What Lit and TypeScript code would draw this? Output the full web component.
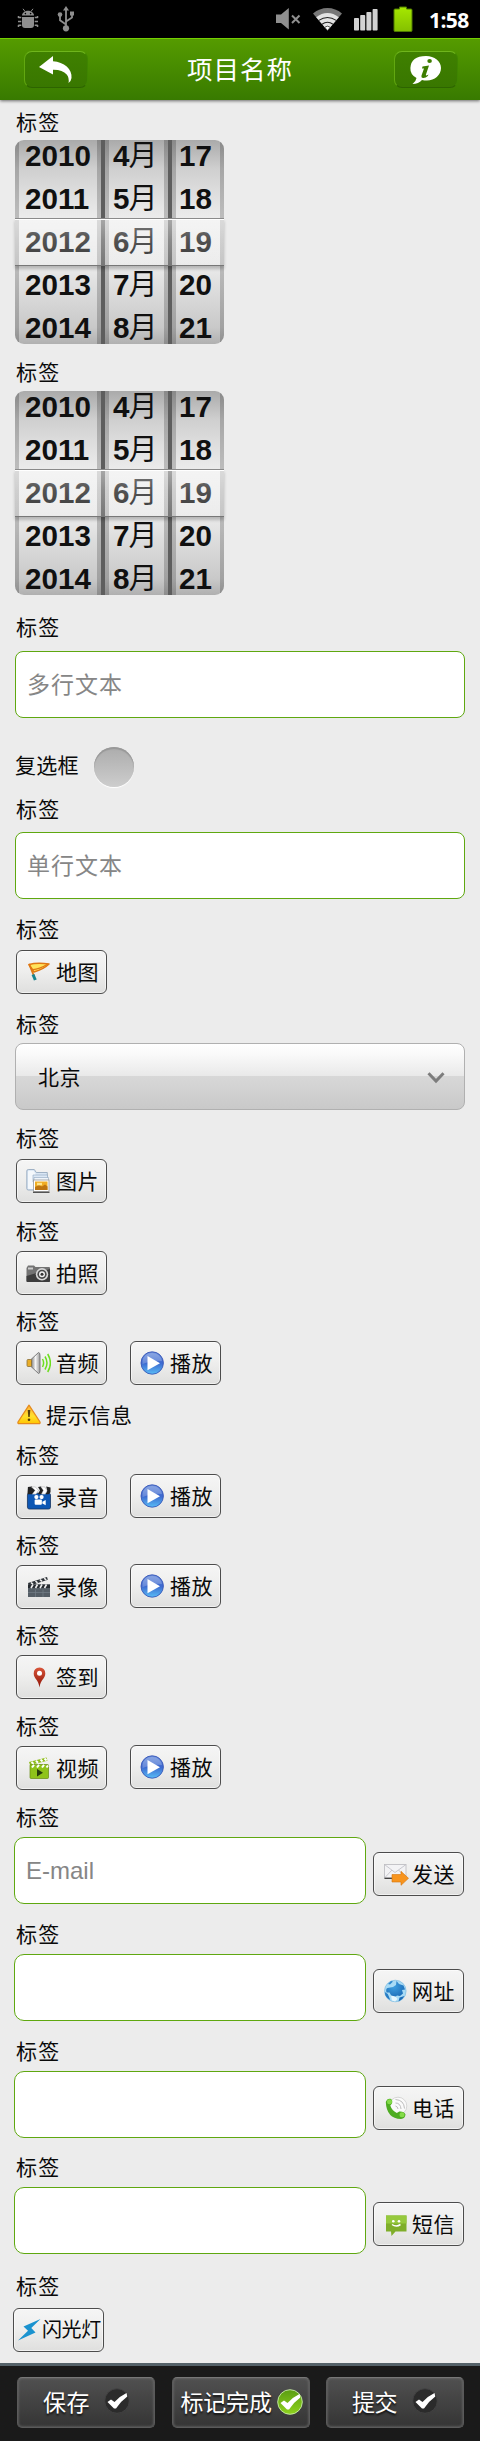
import { LitElement, html, css, nothing, TemplateResult } from "lit";
import { customElement, property } from "lit/decorators.js";

const icons: Record<string, TemplateResult> = {
  debug: html`<svg width="22" height="22" viewBox="0 0 22 22" fill="#8e8e8e">
    <path d="M5 7.600C5 5 7.600 2.800 11 2.800S17 5 17 7.600z" />
    <path d="M6 .8l2 2.600M16 .8l-2 2.600" stroke="#8e8e8e" stroke-width="1" />
    <path d="M5 9h12v8q0 3-3 3H8q-3 0-3-3z" />
    <path d="M4.300 9.600H1.300M4.300 13.500H1M4.300 17.200H1.300M17.700 9.600h3M17.700 13.500H21M17.700 17.200h3M1.500 8v2M20.500 8v2M1.500 19v-2M20.500 19v-2" stroke="#8e8e8e" stroke-width="1.500" fill="none" />
    <circle cx="8.400" cy="5.600" r=".8" fill="#000" /><circle cx="13.600" cy="5.600" r=".8" fill="#000" />
  </svg>`,
  usb: html`<svg width="18" height="26" viewBox="0 0 18 26" fill="none" stroke="#8e8e8e" stroke-width="1.800">
    <path d="M9 22V3M9 18.500l-6-4.200V10M9 15.500l6-4V8" />
    <path d="M9 0l3 4.500H6z" fill="#8e8e8e" stroke="none" />
    <circle cx="9" cy="22.300" r="3.100" fill="#8e8e8e" stroke="none" />
    <circle cx="3" cy="8.600" r="2.300" fill="#8e8e8e" stroke="none" />
    <rect x="13" y="5.500" width="4" height="4" fill="#8e8e8e" stroke="none" />
  </svg>`,
  mute: html`<svg width="25" height="22" viewBox="0 0 25 22">
    <path d="M0 6.500h5L12.800 0v21.500L5 15H0z" fill="#8f8f8f" />
    <path d="M16 7.500l7.500 7.500M23.500 7.500L16 15" stroke="#8f8f8f" stroke-width="2" />
  </svg>`,
  wifi: html`<svg width="29" height="23" viewBox="0 0 29 23">
    <path d="M14.500 22.500L0 5.500Q6.500 0 14.500 0T29 5.500z" fill="#777" />
    <path d="M14.500 22.500L3.200 9.300Q8.500 5 14.500 5t11.300 4.300z" fill="#e2e2e2" />
    <path d="M5.800 12.400Q14.500 6.500 23.200 12.400M9 16.200q5.500-4 11 0" fill="none" stroke="#222" stroke-width="1.100" />
    <path d="M11.700 19.300q2.800-2.300 5.600 0l-2.800 3.200z" fill="#fff" stroke="#222" stroke-width=".8" />
  </svg>`,
  signal: html`<svg width="24" height="22" viewBox="0 0 24 22" fill="#d2d2d2">
    <rect x="0" y="9" width="5" height="12.500" rx=".8" /><rect x="6.200" y="6" width="5" height="15.500" rx=".8" />
    <rect x="12.400" y="3" width="5" height="18.500" rx=".8" /><rect x="18.600" y="0" width="5" height="21.500" rx=".8" />
  </svg>`,
  battery: html`<svg width="20" height="27" viewBox="0 0 20 27">
    <defs><linearGradient id="g" x1="0" x2="0" y1="0" y2="1"><stop stop-color="#a6e800" /><stop offset="1" stop-color="#84c000" /></linearGradient></defs>
    <path d="M6.500 1h7v2H18a1 1 0 0 1 1 1v20.500a1 1 0 0 1-1 1H2a1 1 0 0 1-1-1V4a1 1 0 0 1 1-1h4.500z" fill="url(#g)" stroke="#4e7a00" stroke-width="1" />
  </svg>`,
  back: html`<svg width="34" height="28" viewBox="0 0 34 28">
    <path d="M0 11L14 0v5.200C25 6 33.500 13 32.500 22q-.5 3.500-3 5 1-5-1.800-8.500-4.200-5-13.700-4.800v4.800z" fill="#fff" />
  </svg>`,
  info: html`<svg width="32" height="28" viewBox="0 0 32 28">
    <path d="M16 0c8.500 0 15 5 15 12s-6.500 12.500-14 12.500q-3 0-5-.5-3.500 3.800-9.500 4Q6 25.500 6.500 22 0 18.500.4 12 1 0 16 0z" fill="#fff" />
    <path d="M12.500 10.500l6.500-1-3.200 9.500q0 1.200 2.700-.6l-.7 1.600q-2.300 2.300-5 2-2-.3-1.300-2.500l2.500-7-2 0z" fill="#3d7d00" />
    <ellipse cx="19.600" cy="5" rx="2.300" ry="2" fill="#3d7d00" />
  </svg>`,
  chevron: html`<svg width="18" height="12" viewBox="0 0 18 12"><path d="M1.500 1.200L9 9l7.500-7.800" fill="none" stroke="#7d7d7d" stroke-width="3" /></svg>`,
  map: html`<svg width="24" height="24" viewBox="0 0 24 24">
    <path d="M3 4.500Q11 2.500 23 4 18 9 8 12z" fill="#ffe45c" stroke="#e07813" stroke-width="1.500" stroke-linejoin="round" />
    <path d="M6 9.500q6 .5 16-5.500" stroke="#e07813" stroke-width="1.300" fill="none" />
    <path d="M3 4l5 12" stroke="#e07813" stroke-width="1.800" /><path d="M7 14.500l2.300 5.500" stroke="#17848f" stroke-width="3" />
  </svg>`,
  picture: html`<svg width="24" height="24" viewBox="0 0 24 24">
    <path d="M.8 2q0-1.500 1.500-1.500h6l2 3h11v17.500H2.300q-1.500 0-1.500-1.500z" fill="#d9e6f4" stroke="#8da2b9" stroke-width=".8" />
    <path d="M2 3q0-1.300 1.300-1.300h4.200l2 3V20H3q-1 0-1-1z" fill="#f4f8fc" />
    <path d="M7 6h14.500v7H7z" fill="#dce8f5" stroke="#8fa6bf" stroke-width=".6" /><path d="M8 8.500h14.500v6H8z" fill="#eff5fb" stroke="#8fa6bf" stroke-width=".6" />
    <rect x="7.500" y="11" width="15.500" height="11.500" fill="#fff" stroke="#999" stroke-width=".8" />
    <rect x="9" y="12.500" width="12.500" height="8.500" fill="#f0ad24" /><path d="M9 18l4-2 3 1.500 3-2 2.500 2V21H9z" fill="#bd7410" /><path d="M11 13.800h5v2.500h-5z" fill="#ffe48b" />
    <path d="M7 23.300h16.500" stroke="#303030" stroke-width="1" />
  </svg>`,
  camera: html`<svg width="24" height="24" viewBox="0 0 24 24">
    <path d="M2 4.500h6l1.500 1.500H23q1 0 1 1v13q0 1-1 1H1.500q-1 0-1-1V7z" fill="#737373" />
    <path d="M.5 15L24 8v12q0 1-1 1H1.500q-1 0-1-1z" fill="#3d3d3d" /><rect x="2" y="6.500" width="5" height="2" fill="#ccc" />
    <circle cx="16" cy="13.300" r="6.200" fill="#d8d8d8" /><circle cx="16" cy="13.300" r="4.600" fill="#4a4a4a" /><circle cx="16" cy="13.300" r="3" fill="#f0f0f0" /><circle cx="16" cy="13.300" r="1.500" fill="#333" />
  </svg>`,
  speaker: html`<svg width="25" height="24" viewBox="0 0 25 24">
    <defs><linearGradient id="s" x1="0" x2="1"><stop stop-color="#777" /><stop offset=".5" stop-color="#f6f6f6" /><stop offset="1" stop-color="#999" /></linearGradient></defs>
    <path d="M5 8.500L12.500 1.500q1.500 0 1.500 3v15q0 3-1.500 3L5 15.500z" fill="url(#s)" stroke="#717171" stroke-width=".9" />
    <rect x="1" y="8.500" width="4.500" height="7" rx="1" fill="#e9ad27" stroke="#8a7038" stroke-width=".8" />
    <path d="M16.500 8q2.200 4 0 8M19 5.500q4 6.500 0 13M21.700 3q5.400 9 0 18" fill="none" stroke="#6dde1e" stroke-width="1.500" />
  </svg>`,
  play: html`<svg width="24" height="24" viewBox="0 0 24 24">
    <defs><linearGradient id="p" x1="0" x2="0" y1="0" y2="1"><stop stop-color="#6d90dc" /><stop offset=".5" stop-color="#3c68cf" /><stop offset="1" stop-color="#59bdf6" /></linearGradient></defs>
    <circle cx="12.200" cy="12" r="11.200" fill="url(#p)" stroke="#3a58b8" stroke-width=".9" />
    <path d="M2.500 10Q4 2 12 2t10 8Q12 9 2.500 13z" fill="#fff" opacity=".22" />
    <path d="M7.500 5l12.500 7.200-12.500 7z" fill="#fff" />
  </svg>`,
  warn: html`<svg width="24" height="21" viewBox="0 0 24 21">
    <defs><linearGradient id="w" x1="0" x2="0" y1="0" y2="1"><stop stop-color="#ffb13a" /><stop offset=".6" stop-color="#ffe02b" /><stop offset="1" stop-color="#ffc400" /></linearGradient></defs>
    <path d="M12 1.200L23 18q.5 1.700-1.300 1.700H2.300Q.5 19.700 1 18z" fill="url(#w)" stroke="#e58a1d" stroke-width="1.300" stroke-linejoin="round" />
    <path d="M10.700 6h2.600l-.6 7h-1.400z" fill="#57420b" /><circle cx="12" cy="15.800" r="1.300" fill="#57420b" />
  </svg>`,
  record: html`<svg width="26" height="25" viewBox="-1.500 0 26 25">
    <rect x="0" y="8" width="24" height="16.500" rx="2" fill="#0d57b4" stroke="#12305c" stroke-width=".8" />
    <path d="M.5 1.500l4-.5 4 4.500-4 3.500H0zM11 1.500L14 1l3 4-2 4h-4l2-4zM19.500 1L24 2v5l-2 2h-3l1.500-4z" fill="#222" />
    <path d="M4 1.500L8 1.500l3.500 3.500L9 9H5l3-4zM14 1.500h4l2.500 4L18.500 9h-4l2-4z" fill="#fff" stroke="#888" stroke-width=".4" />
    <circle cx="9.300" cy="12" r="2.200" fill="#fff" /><circle cx="14.700" cy="12" r="2.200" fill="#fff" /><rect x="7.500" y="14.500" width="7.500" height="5.500" rx="1" fill="#fff" /><path d="M15.500 17l3.500-2v5.500l-3.500-1.700z" fill="#fff" />
  </svg>`,
  clapper: html`<svg width="25" height="24" viewBox="-1 0 25 24">
    <path d="M1 8L20 2l.8 2.800L2 11z" fill="#2d3237" /><path d="M4 7.500l2 1.800M8.500 6l2 1.800M13 4.600l2 1.800M17.200 3.200l2 1.800" stroke="#eee" stroke-width="1.600" />
    <rect x="1" y="9.500" width="22" height="12.500" fill="#555e66" /><rect x="1" y="9.500" width="22" height="3.500" fill="#262b30" />
    <path d="M4 13l2-3.500M8.500 13l2-3.500M13 13l2-3.500M17.500 13l2-3.500" stroke="#eee" stroke-width="1.600" /><path d="M1 17.500h22M8.500 14.500V22M16 14.500V22" stroke="#747e87" stroke-width=".7" />
  </svg>`,
  pin: html`<svg width="24" height="24" viewBox="0 0 24 24">
    <defs><linearGradient id="r" x1="0" x2="0" y1="0" y2="1"><stop stop-color="#d9563b" /><stop offset="1" stop-color="#8d1204" /></linearGradient></defs>
    <path d="M13.500 2.500q5.800.3 5.800 6c0 5-5 6.500-5.800 14-.8-7.500-5.800-9-5.800-14q0-5.700 5.800-6z" fill="url(#r)" /><circle cx="13.500" cy="8.200" r="2.500" fill="#fff" />
  </svg>`,
  video: html`<svg width="24" height="24" viewBox="0 0 24 24">
    <path d="M3 6L20.500 1.500l1 3.200L4 9z" fill="#8fbd1c" /><path d="M5.500 6l2 2M10 4.700l2 2M14.500 3.500l2 2M18.500 2.500l2 2" stroke="#fff" stroke-width="2" />
    <rect x="4" y="8.500" width="18.500" height="14" rx="1" fill="#8fc31a" stroke="#648a0e" stroke-width=".7" /><path d="M6 11.500l2-2.700M11 11.500l2-2.700M16 11.500l2-2.700M20.500 11.500l1.500-2" stroke="#fff" stroke-width="2" />
    <path d="M11 13l6 3.800-6 3.700z" fill="#263b0b" />
  </svg>`,
  send: html`<svg width="25" height="24" viewBox="0 0 25 24">
    <rect x=".5" y="2.500" width="21.500" height="13.500" fill="#f3f3f5" stroke="#b9b9bd" stroke-width=".8" /><path d="M.5 2.500L11 10.500l11-8M.5 16l7.500-8M22 16l-7.500-8" fill="none" stroke="#c2c2c7" stroke-width=".9" /><path d="M.5 16.300H9" stroke="#333" stroke-width="1.200" />
    <path d="M8 12.500h9V9.300l7.500 7-7.500 7V20H8z" fill="#f7941e" stroke="#d5730c" stroke-width=".6" />
  </svg>`,
  globe: html`<svg width="24" height="24" viewBox="0 0 24 24">
    <defs><radialGradient id="e" cx=".4" cy=".35" r=".8"><stop stop-color="#3f9fe0" /><stop offset="1" stop-color="#1663b0" /></radialGradient></defs>
    <circle cx="11.300" cy="12" r="10.800" fill="#a9dbf5" stroke="#76b6dd" stroke-width=".6" />
    <path d="M9 8l3-2 .5-4 2.500 3 4.500 1.500 1.500 4-3 .5 1 3.500-3 2.500-3-.5-2.500 2-3-1.500-2-3.500-3 0q-1-4 1-4.500z" fill="url(#e)" /><path d="M.8 13l3 2 2.500 6Q1 18.500.8 13zM15.500 18.500l5-1.500q-2 4-6 5.500zM4 5l3-3 2 .5-3 3z" fill="url(#e)" />
    <path d="M7 16.500l4.500 1 2 2.500-2.500 2.500-3-1z" fill="#e6f6fd" />
  </svg>`,
  phone: html`<svg width="24" height="24" viewBox="0 0 24 24">
    <circle cx="14" cy="10" r="8.800" fill="#fafafa" stroke="#c9c9c9" stroke-width=".7" /><path d="M11.500 7q5 0 5.500 6M11.500 3.500q8.500.5 9 9M11.500 10q2.300.5 2.500 3" fill="none" stroke="#bdbdbd" stroke-width="1" />
    <path d="M1.800 6Q3 2.200 6.500 2.700 9 4 8 7.500L6.300 9.500q1.500 5 6.500 7.500l2.500-1.500q5-.3 6.200 3-.4 4-4.500 4.500Q2.500 22.500 1.800 6z" fill="#4eac22" /><circle cx="5.500" cy="5.700" r="2.500" fill="#84dc48" /><circle cx="18" cy="18.800" r="2.500" fill="#84dc48" />
  </svg>`,
  sms: html`<svg width="24" height="24" viewBox="0 0 24 24">
    <path d="M2 3.500h20.500v16H11.500L7.500 24l-.5-4.500H2z" fill="#7fae2a" /><path d="M2 3.500h20.500v8H2z" fill="#96c93d" /><circle cx="9.300" cy="9.200" r="1.300" fill="#fff" /><circle cx="15" cy="9.200" r="1.300" fill="#fff" /><path d="M8 12.500q4.200 2.800 8.500 0" fill="none" stroke="#fff" stroke-width="1.500" />
  </svg>`,
  flash: html`<svg width="24" height="24" viewBox="0 0 24 24"><path d="M23.500 1L6.500 8.500l4.500 4.200L1 22.500l17.500-8-4.200-4.500z" fill="#1b93cf" /></svg>`,
};

const tick = (green: boolean) => html`<svg class="tick ${green ? "green" : ""}" width="26" height="26" viewBox="0 0 26 26">
  <defs><linearGradient id="t" x1="0" x2="0" y1="0" y2="1"><stop stop-color="#5b9d12" /><stop offset="1" stop-color="#8ed21d" /></linearGradient></defs>
  <circle cx="13" cy="13" r="12.300" fill=${green ? "url(#t)" : "#2b2b2b"} stroke=${green ? "#c9ecab" : "#444"} stroke-width=".9" />
  <path d="M3.500 14l3.500-2.500 3.500 2.500Q16 8 22.500 5l.8 3.500Q17 13 12 20.500H10z" fill="#fff" />
</svg>`;

@customElement("date-wheel")
export class DateWheel extends LitElement {
  static styles = css`
    :host { display: block; width: 209px; height: 204px; }
    .wheel { display: grid; grid-template: 204px / 88px 67px 54px; position: relative; border-radius: 9px;
      background: linear-gradient(90deg, transparent 20px, #5e5e5e 20px 190px, transparent 190px); }
    .col { display: flex; flex-direction: column; margin: 0 2px; height: 204px;
      background:
        linear-gradient(90deg, rgba(0,0,0,.2) 0 4px, transparent 4px calc(100% - 4px), rgba(0,0,0,.2) calc(100% - 4px)),
        linear-gradient(#aaa 0, #cfcfcf 14%, #dedede 26%, #ebebeb 38%, #ececec 60%, #dedede 72%, #c9c9c9 92%, #b0b0b0 100%); }
    .col:first-child { margin-left: 0; border-radius: 9px 0 0 9px; }
    .col:nth-child(3) { margin-right: 0; border-radius: 0 9px 9px 0; }
    .row { height: 43px; flex: none; white-space: nowrap; color: #101010;
      font: bold 29.600px/43px "Liberation Sans", Arial, sans-serif; padding-left: 10px; }
    .row:first-child { margin-top: -6px; }
    .col:nth-child(2) .row { padding-left: 8px; }
    .col:nth-child(3) .row { padding-left: 7px; }
    .unit { font: 400 29px/0 "Noto Sans CJK SC", sans-serif; margin-left: -1px; }
    .glass { position: absolute; left: 0; right: 0; top: 78px; height: 48px; box-sizing: border-box;
      border-top: 1px solid #8a8a8a; border-bottom: 1px solid #777;
      background: linear-gradient(#fff 0 1px, rgba(255,255,255,.45) 1px, rgba(255,255,255,.28) 45%, rgba(235,235,235,.18)); box-shadow: 0 3px 3px rgba(0,0,0,.22); }
  `;
  cols = [
    ["2010", "2011", "2012", "2013", "2014"],
    ["4", "5", "6", "7", "8"],
    ["17", "18", "19", "20", "21"],
  ];
  render() {
    return html`<div class="wheel">
      ${this.cols.map((c, i) => html`<div class="col">${c.map((v) => html`<div class="row">${v}${i === 1 ? html`<span class="unit">月</span>` : nothing}</div>`)}</div>`)}
      <div class="glass"></div>
    </div>`;
  }
}

@customElement("tool-button")
export class ToolButton extends LitElement {
  @property() icon = "";
  @property() text = "";
  @property() kind = "";
  static styles = css`
    :host { display: block; width: 91px; flex: none; }
    .btn { box-sizing: border-box; height: 44px; display: flex; align-items: center; gap: 5px; padding-left: 9px;
      border: 1px solid #4c4c4c; border-radius: 6px; white-space: nowrap; color: #0a0a0a;
      background: linear-gradient(#f5f5f5, #efefee 45%, #dfdfde); box-shadow: inset 0 0 0 1px rgba(255,255,255,.55);
      font: 400 21px/30px "Noto Sans CJK SC", sans-serif; letter-spacing: .5px; }
    .icon { width: 25px; display: flex; flex: none; }
    .text { padding-bottom: 2px; }
    .side { gap: 3px; padding-left: 10px; }
    .tight { gap: 0; padding-left: 3px; font-size: 20px; letter-spacing: -.4px; }
  `;
  render() {
    return html`<div class="btn ${this.kind}"><span class="icon">${icons[this.icon]}</span><span class="text">${this.text}</span></div>`;
  }
}

interface Field { before: number; gap: number; body: TemplateResult; }

const single = (icon: string, text: string) => html`<tool-button class="inset" icon=${icon} text=${text}></tool-button>`;
const pair = (icon: string, text: string, level = false) => html`<div class="pair">
  <tool-button icon=${icon} text=${text}></tool-button><tool-button class=${level ? "" : "raised"} icon="play" text="播放"></tool-button></div>`;
const entry = (hint: string, icon: string, text: string) => html`<div class="entry">
  <div class="box latin">${hint}</div><tool-button icon=${icon} text=${text} kind="side"></tool-button></div>`;

@customElement("app-root")
export class AppRoot extends LitElement {
  static styles = css`
    :host { display: block; width: 480px; height: 2441px; background: #ececec; color: #0a0a0a;
      font-family: "Noto Sans CJK SC", sans-serif; overflow: hidden; }
    svg { display: block; flex: none; }
    .status { height: 38px; background: #000; display: flex; align-items: center; box-sizing: border-box; padding: 0 10px 0 17px; }
    .usb { margin-left: 18px; margin-right: auto; }
    .mute { margin-right: 12px; }
    .wifi { margin-right: 12px; }
    .signal { margin-right: 15px; margin-top: 2px; }
    .clock { font: bold 21px/38px "Open Sans", sans-serif; color: #fff; margin-left: 16px; width: 41px; letter-spacing: -.6px; padding-top: 2px; }
    .bar { height: 62px; box-sizing: border-box; border-top: 1px solid #73cf00; display: flex; align-items: center; justify-content: space-between;
      padding: 0 22px 0 24px; background: linear-gradient(#559b00, #387a00); box-shadow: 0 1px 3px rgba(0,0,0,.55); position: relative; }
    .title { color: #fff; font-size: 25.500px; line-height: 36px; letter-spacing: 1px; padding: 0 2px 3px 0; }
    .key { width: 64px; height: 37px; box-sizing: border-box; border-radius: 8px; background: linear-gradient(#3f8000, #397700);
      border: 1px solid; border-color: #6fb51c #3f8500 #2d6400 #62a810; display: flex; align-items: center; justify-content: center; }
    .form { display: flex; flex-direction: column; padding: 10px 15px 0; }
    .field { display: flex; flex-direction: column; }
    .label { height: 23px; line-height: 22px; font-size: 21px; letter-spacing: 1.200px; padding-left: 1px; }
    .box { box-sizing: border-box; height: 67px; border: 1px solid #5fa810; border-radius: 8px; background: #fff; color: #868686;
      font-size: 23px; line-height: 63px; letter-spacing: 1px; padding-left: 11px; }
    .latin { width: 352px; font: 24px/65px "Liberation Sans", Arial, sans-serif; letter-spacing: 0; padding-left: 11px; border-radius: 10px; }
    .select { box-sizing: border-box; height: 67px; border: 1px solid #b0b0b0; border-radius: 8px; display: flex; align-items: center;
      justify-content: space-between; padding: 1px 19px 2px 22px; font-size: 21px; letter-spacing: .5px;
      background: linear-gradient(#fff 0, #fafafa 15%, #e9e9e9 49%, #d8d8d8 49%, #c9c9c9 100%); }
    .select svg { margin-top: 3px; }
    .check { display: flex; height: 40px; margin: 29px 0 1px; gap: 14px; }
    .check-text { font-size: 21px; line-height: 34px; letter-spacing: .3px; width: 65px; white-space: nowrap; }
    .dot { width: 40px; height: 40px; border-radius: 50%; background: linear-gradient(#acacac, #cdcdcd); box-shadow: inset 0 2px 1px #989898, 0 1px 1px #fff; }
    .inset { margin-left: 1px; }
    .pair { display: flex; gap: 23px; padding-left: 1px; }
    .raised { margin-top: -1px; }
    .entry { display: flex; gap: 7px; margin-left: -1px; }
    .entry tool-button { margin-top: 15px; }
    .shift { margin-left: -2px; }
    .tip { display: flex; align-items: center; gap: 5px; margin: 18px 0 1px; height: 22px; padding-left: 2px; font-size: 21px; line-height: 22px; letter-spacing: .7px; }
    .footer { box-sizing: border-box; margin-top: 11px; height: 78px; border-top: 3px solid #546168; background: #1a1a1a;
      display: flex; gap: 16.500px; padding: 11px 0 0 17px; }
    .action { box-sizing: border-box; width: 138px; height: 51px; border-radius: 5px; border: 1px solid #5a5a5a; border-top-color: #777;
      background: linear-gradient(#505050, #353535); box-shadow: inset 0 0 3px #777; display: flex; align-items: center; white-space: nowrap;
      color: #fff; font-size: 23px; line-height: 30px; letter-spacing: .4px; text-shadow: 0 2px 2px #111; padding: 0 0 1px 25px; gap: 14px; }
    .action:nth-child(2) { padding-left: 8px; gap: 5px; letter-spacing: -.2px; }
    .action:nth-child(3) { letter-spacing: -.5px; gap: 15px; }
    .action span { padding-bottom: 2px; }
    .tick { margin-top: -3px; }
    .tick.green { margin-top: 0; }
  `;

  field = (f: Field) => html`<div class="field" style="margin-top:${f.before - 1}px;row-gap:${f.gap}px">
    <div class="label">标签</div>${f.body}</div>`;

  render() {
    const F = (before: number, gap: number, body: TemplateResult) => this.field({ before, gap, body });
    return html`
      <div class="status">
        ${icons.debug}<span class="usb">${icons.usb}</span>
        <span class="mute">${icons.mute}</span><span class="wifi">${icons.wifi}</span>
        <span class="signal">${icons.signal}</span>${icons.battery}<span class="clock">1:58</span>
      </div>
      <div class="bar"><div class="key">${icons.back}</div><div class="title">项目名称</div><div class="key">${icons.info}</div></div>
      <div class="form">
        ${F(1, 7, html`<date-wheel></date-wheel>`)}
        ${F(17, 8, html`<date-wheel></date-wheel>`)}
        ${F(21, 13, html`<div class="box">多行文本</div>`)}
        <div class="check"><span class="check-text">复选框</span><span class="dot"></span></div>
        ${F(10, 12, html`<div class="box">单行文本</div>`)}
        ${F(19, 10, single("map", "地图"))}
        ${F(19, 8, html`<div class="select"><span>北京</span>${icons.chevron}</div>`)}
        ${F(17, 10, single("picture", "图片"))}
        ${F(17, 9, single("camera", "拍照"))}
        ${F(15, 9, pair("speaker", "音频", true))}
        <div class="tip">${icons.warn}<span>提示信息</span></div>
        ${F(18, 9, pair("record", "录音"))}
        ${F(15, 9, pair("clapper", "录像"))}
        ${F(15, 9, single("pin", "签到"))}
        ${F(16, 9, pair("video", "视频"))}
        ${F(16, 9, entry("E-mail", "send", "发送"))}
        ${F(19, 9, entry("", "globe", "网址"))}
        ${F(19, 9, entry("", "phone", "电话"))}
        ${F(18, 9, entry("", "sms", "短信"))}
        ${F(21, 11, html`<tool-button class="shift" icon="flash" text="闪光灯" kind="tight"></tool-button>`)}
      </div>
      <div class="footer">
        <div class="action"><span>保存</span>${tick(false)}</div>
        <div class="action"><span>标记完成</span>${tick(true)}</div>
        <div class="action"><span>提交</span>${tick(false)}</div>
      </div>`;
  }
}
